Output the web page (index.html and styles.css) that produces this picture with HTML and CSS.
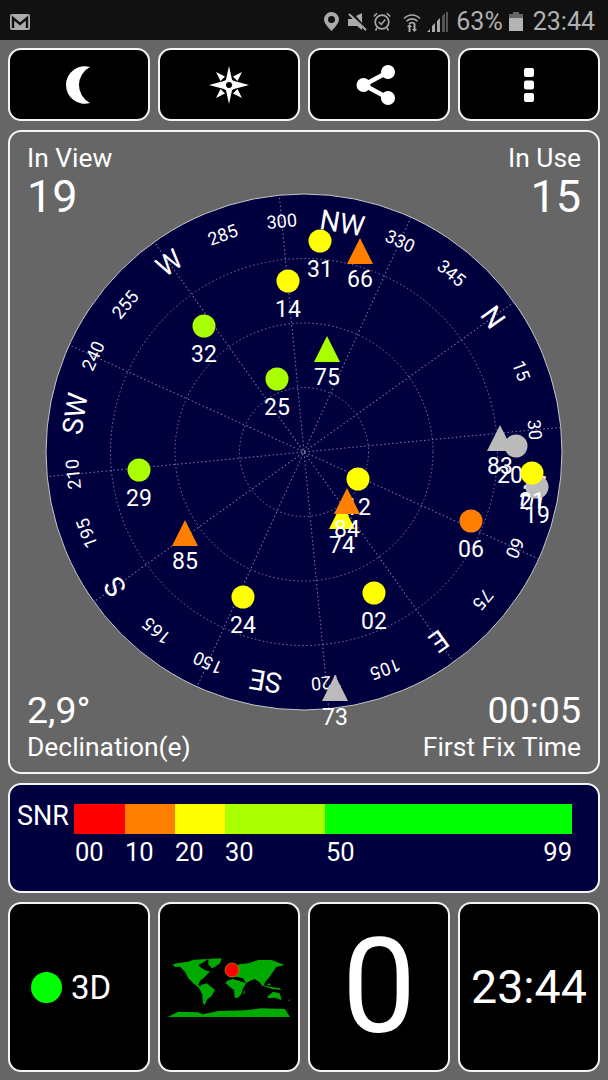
FILE: index.html
```html
<!DOCTYPE html>
<html lang="en">
<head>
  <meta charset="UTF-8" />
  <meta name="viewport" content="width=device-width, initial-scale=1.0"/>
  <title>GPS Test</title>
  <link rel="stylesheet" href="styles.css">
</head>
<body>

<div class="status-bar">
  <svg class="icon-mail" width="20" height="16" viewBox="0 0 20 16">
    <rect width="20" height="16" rx="2" fill="#aaa"/>
    <path d="M3 14V4l7 6 7-6v10" fill="none" stroke="#111" stroke-width="2.4"/>
  </svg>
  <div class="status-right">
    <svg class="icon-pin" width="15" height="19" viewBox="0 0 15 19">
      <path d="M7.500 0A7.500 7.500 0 0 0 0 7.500C0 12 7.500 19 7.500 19S15 12 15 7.500A7.500 7.500 0 0 0 7.500 0ZM7.500 4A3.500 3.500 0 1 1 7.500 11 3.500 3.500 0 0 1 7.500 4Z" fill="#aaa" fill-rule="evenodd"/>
    </svg>
    <svg width="19" height="18" viewBox="0 0 19 18">
      <path d="M0 6h4l1-1 9 9v3l-5-4H0ZM8 3l6-3v10Z" fill="#aaa"/>
      <path d="M1 1l17 16" stroke="#aaa" stroke-width="2"/>
    </svg>
    <svg class="icon-alarm" width="18" height="19" viewBox="0 0 18 19">
      <circle cx="9" cy="10" r="6.800" fill="none" stroke="#aaa" stroke-width="1.700"/>
      <path d="M5.800 10l2.500 2.500 4-5M0.800 4.500L4 1.200M17.200 4.500L14 1.200M4 16l-1.500 2.500M14 16l1.500 2.500" fill="none" stroke="#aaa" stroke-width="1.500"/>
    </svg>
    <svg class="icon-wifi" width="18" height="20" viewBox="0 0 18 20">
      <path d="M1 6.500C5.500 1.800 12.500 1.800 17 6.500M3.500 9.300C6.500 6 11.500 6 14.500 9.300M6 12C7.700 10.200 10.300 10.200 12 12" fill="none" stroke="#aaa" stroke-width="1.700"/>
      <path d="M5.500 20v-5H4l2.500-3L9 15H7.500v5ZM10.500 12v5H9l2.500 3 2.500-3h-1.500v-5Z" fill="#aaa"/>
    </svg>
    <svg class="icon-signal" width="21" height="20" viewBox="0 0 21 20">
      <path d="M0 20l3-3v3ZM5 20v-6l3-3v9ZM10 20V9l3-3v14Z" fill="#aaa"/>
      <path d="M15 20V4l3-3v19Z" fill="#555"/>
      <path d="M19 20V0h2v20Z" fill="#555"/>
    </svg>
    <span>63%</span>
    <svg class="icon-battery" width="14" height="19" viewBox="0 0 14 19">
      <path d="M4 0h6v2h4v5H0V2h4Z" fill="#666"/>
      <path d="M0 6h14v13H0Z" fill="#b4b4b4"/>
    </svg>
    <span class="status-time">23:44</span>
  </div>
</div>

<div class="main">
  <div class="toolbar">
    <div class="card">
      <svg class="icon-moon" width="24" height="38" viewBox="0 0 24 38">
        <path d="M24 1A18.750 18.750 0 1 0 24 37A20.200 20.200 0 0 1 24 1Z" fill="#fff"/>
      </svg>
    </div>
    <div class="card">
      <svg width="40" height="38" viewBox="-20 -19 40 38">
        <path d="M0-19L3.200-4.500 20 0 3.200 4.500 0 19-3.200 4.500-20 0-3.200-4.500Z" fill="#fff"/>
        <path d="M13-13L4-8.500 8.500-4ZM-13-13L-4-8.500-8.500-4ZM13 13L4 8.500 8.500 4ZM-13 13L-4 8.500-8.500 4Z" fill="#fff"/>
        <circle r="6" fill="#fff"/>
        <circle r="3" fill="#000"/>
      </svg>
    </div>
    <div class="card">
      <svg class="icon-share" width="40" height="40" viewBox="0 0 40 40">
        <path d="M32 7L8 20 32 33" fill="none" stroke="#fff" stroke-width="4.500"/>
        <circle cx="32" cy="7" r="7" fill="#fff"/>
        <circle cx="7.500" cy="20" r="7" fill="#fff"/>
        <circle cx="32" cy="33" r="7" fill="#fff"/>
      </svg>
    </div>
    <div class="card">
      <svg width="10" height="34" viewBox="0 0 10 34">
        <rect width="10" height="9" rx="2" fill="#fff"/>
        <rect y="12.500" width="10" height="9" rx="2" fill="#fff"/>
        <rect y="25" width="10" height="9" rx="2" fill="#fff"/>
      </svg>
    </div>
  </div>

  <div class="radar-panel">
    <svg class="radar" width="588" height="640" viewBox="10 132 588 640">
      <g transform="translate(304 452)">
        <circle class="disc" r="258"/>
        <circle class="ring" r="64.500"/>
        <circle class="ring" r="129"/>
        <circle class="ring" r="193.500"/>
        <path class="spoke" d="M0-258V258" transform="rotate(24.500)"/>
        <path class="spoke" d="M0-258V258" transform="rotate(54.500)"/>
        <path class="spoke" d="M0-258V258" transform="rotate(84.500)"/>
        <path class="spoke" d="M0-258V258" transform="rotate(114.500)"/>
        <path class="spoke" d="M0-258V258" transform="rotate(144.500)"/>
        <path class="spoke" d="M0-258V258" transform="rotate(174.500)"/>

        <text class="bearing" transform="rotate(54.500) translate(0 -232)">N</text>
        <text class="degree" transform="rotate(69.500) translate(0 -232)">15</text>
        <text class="degree" transform="rotate(84.500) translate(0 -232)">30</text>
        <text class="bearing" transform="rotate(99.500) translate(0 -232)">NE</text>
        <text class="degree" transform="rotate(114.500) translate(0 -232)">60</text>
        <text class="degree" transform="rotate(129.500) translate(0 -232)">75</text>
        <text class="bearing" transform="rotate(144.500) translate(0 -232)">E</text>
        <text class="degree" transform="rotate(159.500) translate(0 -232)">105</text>
        <text class="degree" transform="rotate(174.500) translate(0 -232)">120</text>
        <text class="bearing" transform="rotate(189.500) translate(0 -232)">SE</text>
        <text class="degree" transform="rotate(204.500) translate(0 -232)">150</text>
        <text class="degree" transform="rotate(219.500) translate(0 -232)">165</text>
        <text class="bearing" transform="rotate(234.500) translate(0 -232)">S</text>
        <text class="degree" transform="rotate(249.500) translate(0 -232)">195</text>
        <text class="degree" transform="rotate(264.500) translate(0 -232)">210</text>
        <text class="bearing" transform="rotate(279.500) translate(0 -232)">SW</text>
        <text class="degree" transform="rotate(294.500) translate(0 -232)">240</text>
        <text class="degree" transform="rotate(309.500) translate(0 -232)">255</text>
        <text class="bearing" transform="rotate(324.500) translate(0 -232)">W</text>
        <text class="degree" transform="rotate(339.500) translate(0 -232)">285</text>
        <text class="degree" transform="rotate(354.500) translate(0 -232)">300</text>
        <text class="bearing" transform="rotate(9.500) translate(0 -232)">NW</text>
        <text class="degree" transform="rotate(24.500) translate(0 -232)">330</text>
        <text class="degree" transform="rotate(39.500) translate(0 -232)">345</text>
      </g>

      <!-- satellites: circles and triangles -->
      <circle class="sat-yellow" cx="320" cy="241" r="11.500"/><text class="sat-id" x="320" y="277">31</text>
      <circle class="sat-yellow" cx="288" cy="281" r="11.500"/><text class="sat-id" x="288" y="317">14</text>
      <circle class="sat-lime" cx="204" cy="326" r="11.500"/><text class="sat-id" x="204" y="362">32</text>
      <circle class="sat-lime" cx="277" cy="379" r="11.500"/><text class="sat-id" x="277" y="415">25</text>
      <circle class="sat-lime" cx="139" cy="470" r="11.500"/><text class="sat-id" x="139" y="506">29</text>
      <circle class="sat-yellow" cx="243" cy="597" r="11.500"/><text class="sat-id" x="243" y="633">24</text>
      <circle class="sat-yellow" cx="374" cy="593" r="11.500"/><text class="sat-id" x="374" y="629">02</text>
      <circle class="sat-orange" cx="471" cy="521" r="11.500"/><text class="sat-id" x="471" y="557">06</text>

      <polygon class="sat-orange" points="360,238 373,264 347,264"/><text class="sat-id" x="360" y="287">66</text>
      <polygon class="sat-lime" points="327,336 340,362 314,362"/><text class="sat-id" x="327" y="385">75</text>
      <polygon class="sat-orange" points="185,520 198,546 172,546"/><text class="sat-id" x="185" y="569">85</text>
      <polygon class="sat-gray" points="335,675 348,701 322,701"/><text class="sat-id" x="335" y="725">73</text>

      <polygon class="sat-yellow" points="342,503 355,529 329,529"/><text class="sat-id" x="342" y="553">74</text>
      <circle class="sat-yellow" cx="358" cy="479" r="11.500"/><text class="sat-id" x="358" y="515">12</text>
      <polygon class="sat-orange" points="347,488 360,514 334,514"/><text class="sat-id" x="347" y="537">84</text>

      <polygon class="sat-gray" points="500,425 513,451 487,451"/><text class="sat-id" x="500" y="474">83</text>
      <circle class="sat-gray" cx="516" cy="446" r="11.500"/><text class="sat-id" x="510" y="483">20</text>
      <circle class="sat-gray" cx="537" cy="487" r="11.500"/><text class="sat-id" x="537" y="523">19</text>
      <circle class="sat-yellow" cx="532" cy="473" r="11.500"/><text class="sat-id" x="532" y="509">21</text>
    </svg>

    <div class="corner top-left"><div class="corner-label">In View</div><div class="corner-big">19</div></div>
    <div class="corner top-right"><div class="corner-label">In Use</div><div class="corner-big">15</div></div>
    <div class="corner bottom-left"><div class="corner-mid">2,9°</div><div class="corner-label">Declination(e)</div></div>
    <div class="corner bottom-right"><div class="corner-mid">00:05</div><div class="corner-label">First Fix Time</div></div>
  </div>

  <div class="snr-panel">
    <div class="snr-title">SNR</div>
    <div class="snr-scale">
      <div class="snr-bar">
        <div class="seg-red"></div>
        <div class="seg-orange"></div>
        <div class="seg-yellow"></div>
        <div class="seg-lime"></div>
        <div class="seg-green"></div>
      </div>
      <div class="snr-labels">
        <span>00</span><span>10</span><span>20</span><span>30</span><span>50</span><span>99</span>
      </div>
    </div>
  </div>

  <div class="bottom-row">
    <div class="card">
      <div class="fix-dot"></div>
      <span class="fix-text">3D</span>
    </div>
    <div class="card">
      <svg class="world-map" width="130" height="65" viewBox="0 0 390 195">
        <g fill="#00aa00">
          <path d="M22 28L45 23 70 20 85 14 130 12 112 24 100 30 110 40 120 45 135 50 125 60 115 70 105 78 100 90 112 100 106 102 85 85 70 70 60 50 45 35 30 36Z"/>
          <path d="M130 12L170 10 165 25 150 35 140 40 130 28Z"/>
          <path d="M108 90L125 85 150 105 140 122 125 135 120 150 114 145 112 120 103 100Z"/>
          <path d="M189 62L200 45 222 28 250 25 280 15 320 15 359 30 334 36 324 50 314 65 301 80 294 95 284 82 269 72 254 78 244 85 234 70 215 65 195 66Z"/>
          <path d="M185 78L204 72 224 78 244 85 234 100 229 118 219 128 209 128 207 105 194 95 182 85Z"/>
          <path d="M289 90L314 95 344 100 349 105 324 102 304 97ZM305 88L315 85 317 93ZM235 110L240 108 238 120Z"/>
          <path d="M307 125L324 110 344 115 350 135 329 128 309 130Z"/>
          <path d="M370 137L375 131 375 137Z"/>
          <path d="M8 186L40 170 100 172 112 178 160 168 240 166 290 160 360 162 375 186Z"/>
        </g>
        <circle cx="201" cy="45" r="21" fill="#ff0000" stroke="#cc8800" stroke-width="2"/>
      </svg>
    </div>
    <div class="card"><span class="speed">0</span></div>
    <div class="card"><span class="clock">23:44</span></div>
  </div>
</div>

</body>
</html>
```

FILE: styles.css
```css
body {
  margin: 0;
  width: 608px;
  height: 1080px;
  overflow: hidden;
  background-color: #666;
  color: white;
  font-family: Roboto, sans-serif;
}

svg {
  display: block;
}

.status-bar {
  display: flex;
  justify-content: space-between;
  align-items: center;
  height: 40px;
  padding: 3px 13px 0 10px;
  box-sizing: border-box;
  background-color: #111;
  color: #b0b0b0;
  font-size: 25px;
}

.status-right {
  display: flex;
  align-items: center;
  gap: 8px;
}

.icon-pin {
  margin-right: 1px;
}

.icon-alarm {
  margin-left: -2px;
}

.icon-wifi {
  margin-left: 4px;
}

.icon-signal {
  margin-left: -2px;
}

.icon-battery {
  margin-left: -2px;
}

.status-time {
  margin-left: 2px;
}

.main {
  display: flex;
  flex-direction: column;
  gap: 9px;
  padding: 8px;
}

.toolbar,
.bottom-row {
  display: grid;
  grid-template-columns: repeat(4, 142px);
  gap: 8px;
}

.toolbar {
  height: 73px;
}

.bottom-row {
  height: 170px;
}

.card {
  display: flex;
  justify-content: center;
  align-items: center;
  box-sizing: border-box;
  background-color: #000;
  border: 2px solid #f4f4f4;
  border-radius: 13px;
}

.icon-moon {
  margin-right: 2px;
}

.icon-share {
  margin-right: 6px;
}

.radar-panel {
  position: relative;
  height: 644px;
  box-sizing: border-box;
  border: 2px solid #f4f4f4;
  border-radius: 13px;
}

.disc {
  fill: #00003f;
  stroke: #c8c8c8;
  stroke-width: 1;
}

.ring,
.spoke {
  fill: none;
  stroke: #7c7ca0;
  stroke-width: 1;
  stroke-dasharray: 1.5 2.5;
}

.bearing,
.degree {
  fill: #fff;
  text-anchor: middle;
  dominant-baseline: central;
}

.bearing {
  font-size: 28px;
}

.degree {
  font-size: 18px;
}

.sat-id {
  fill: #fff;
  font-size: 23px;
  text-anchor: middle;
}

.sat-yellow { fill: #ffff00; }
.sat-lime { fill: #aaff00; }
.sat-orange { fill: #ff8000; }
.sat-gray { fill: #bbb; }

.corner {
  position: absolute;
  font-size: 26.400px;
}

.top-left { top: 11px; left: 17px; }
.top-right { top: 11px; right: 17px; text-align: right; }
.bottom-left { bottom: 10px; left: 17px; }
.bottom-right { bottom: 10px; right: 17px; text-align: right; }

.corner-label {
  line-height: 30px;
}

.corner-big {
  margin-top: 2px;
  font-size: 45px;
  line-height: 44px;
}

.corner-mid {
  font-size: 37.500px;
  line-height: 44px;
}

.snr-panel {
  display: flex;
  gap: 5px;
  height: 110px;
  padding: 19px 26px 0 7px;
  box-sizing: border-box;
  background-color: #00003f;
  border: 2px solid #f4f4f4;
  border-radius: 13px;
}

.snr-title {
  font-size: 27px;
  line-height: 24px;
}

.snr-scale {
  flex: 1;
}

.snr-bar {
  display: grid;
  grid-template-columns: 51px 50px 50px 100px 1fr;
  height: 30px;
}

.seg-red { background-color: #ff0000; }
.seg-orange { background-color: #ff8000; }
.seg-yellow { background-color: #ffff00; }
.seg-lime { background-color: #aaff00; }
.seg-green { background-color: #00ff00; }

.snr-labels {
  display: grid;
  grid-template-columns: 50px 50px 50px 101px 1fr auto;
  padding: 3px 0 0 1px;
  font-size: 25.500px;
  line-height: 30px;
}

.fix-dot {
  width: 31px;
  height: 31px;
  margin-right: 9px;
  border-radius: 50%;
  background-color: #00ff00;
}

.fix-text {
  margin-right: 16px;
  font-size: 33px;
}

.world-map {
  margin: 1px 0 0 2px;
}

.speed {
  font-size: 132px;
  line-height: 1;
}

.clock {
  font-size: 46.500px;
}
```
